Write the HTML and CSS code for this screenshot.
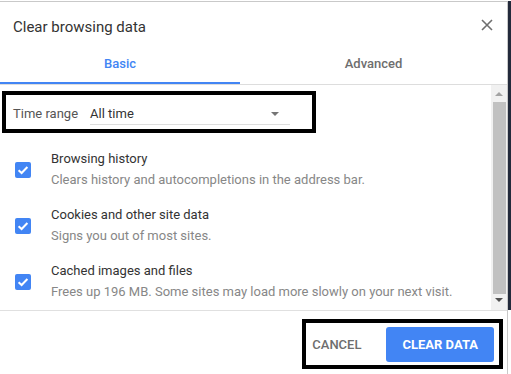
FILE: index.html
```html
<!DOCTYPE html>
<html lang="en">
<head>
  <meta charset="UTF-8">
  <title>Clear browsing data</title>
  <meta name="viewport" content="width=device-width, initial-scale=1.0">
  <link rel="stylesheet" href="styles.css">
</head>
<body>

  <div class="screen">
    <div class="dialog">
      <div class="header">
        <div class="title">Clear browsing data</div>
        <svg class="close" width="12" height="12" viewBox="0 0 12 12">
          <path d="M1 1 L11 11 M11 1 L1 11" stroke="#6f6f6f" stroke-width="1.6" fill="none"/>
        </svg>
      </div>

      <div class="tabs">
        <div class="tab active">Basic</div>
        <div class="tab">Advanced</div>
      </div>

      <div class="main">
        <div class="content">
          <div class="time-range">
            <span class="range-label">Time range</span>
            <div class="select">
              <span>All time</span>
              <span class="arrow"></span>
            </div>
          </div>

          <div class="options">
            <div class="option">
              <span class="checkbox"><svg width="16" height="16" viewBox="0 0 16 16"><path d="M3.6 8.2 L6.6 11 L12.4 5" stroke="#fff" stroke-width="2" fill="none"/></svg></span>
              <div class="option-text">
                <div class="option-title">Browsing history</div>
                <div class="option-sub">Clears history and autocompletions in the address bar.</div>
              </div>
            </div>
            <div class="option">
              <span class="checkbox"><svg width="16" height="16" viewBox="0 0 16 16"><path d="M3.6 8.2 L6.6 11 L12.4 5" stroke="#fff" stroke-width="2" fill="none"/></svg></span>
              <div class="option-text">
                <div class="option-title">Cookies and other site data</div>
                <div class="option-sub">Signs you out of most sites.</div>
              </div>
            </div>
            <div class="option">
              <span class="checkbox"><svg width="16" height="16" viewBox="0 0 16 16"><path d="M3.6 8.2 L6.6 11 L12.4 5" stroke="#fff" stroke-width="2" fill="none"/></svg></span>
              <div class="option-text">
                <div class="option-title">Cached images and files</div>
                <div class="option-sub">Frees up 196 MB. Some sites may load more slowly on your next visit.</div>
              </div>
            </div>
          </div>
        </div>

        <div class="scrollbar">
          <span class="sb-up"></span>
          <div class="sb-thumb"></div>
          <span class="sb-down"></span>
        </div>
      </div>

      <div class="footer">
        <div class="actions">
          <span class="cancel">CANCEL</span>
          <span class="clear">CLEAR DATA</span>
        </div>
      </div>
    </div>
    <div class="edge"></div>
  </div>

</body>
</html>
```

FILE: styles.css
```css
body {
  margin: 0;
  padding-top: 1px;
  font-family: Roboto, 'Noto Sans', sans-serif;
  background: #fff;
}

.screen {
  display: flex;
  height: 373px;
}

.dialog {
  width: 508px;
  box-sizing: border-box;
  border-top: 1px solid #c9c9c9;
  border-right: 1px solid #c9c9c9;
  display: flex;
  flex-direction: column;
}

.edge {
  width: 3px;
  height: 309px;
  background: #232a3b;
}

.header {
  height: 42px;
  display: flex;
  justify-content: space-between;
  align-items: flex-start;
  padding: 0 14px 0 13px;
}

.title {
  font-size: 15px;
  line-height: 20px;
  color: #333;
  padding-top: 15px;
}

.close {
  margin-top: 17px;
}

.tabs {
  display: flex;
  border-bottom: 1px solid #ddd;
}

.tab {
  height: 40px;
  line-height: 40px;
  text-align: center;
  font-size: 13px;
  font-weight: 500;
  color: #6e6e6e;
  flex: 1;
}

.tab.active {
  flex: 0 0 240px;
  color: #4285f4;
  box-shadow: inset 0 -2px #4285f4;
}

.main {
  display: flex;
  height: 225px;
}

.content {
  flex: 1;
  padding: 6px 0 0 2px;
}

.time-range {
  width: 314px;
  height: 42px;
  box-sizing: border-box;
  border: 4px solid #000;
  padding: 4px 22px 0 7px;
  display: flex;
  align-items: center;
  gap: 12px;
}

.range-label {
  font-size: 13px;
  line-height: 20px;
  color: #555;
}

.select {
  flex: 1;
  display: flex;
  justify-content: space-between;
  align-items: center;
  border-bottom: 1px solid #ddd;
  font-size: 13px;
  line-height: 20px;
  color: #333;
}

.arrow {
  width: 0;
  height: 0;
  border-left: 4px solid transparent;
  border-right: 4px solid transparent;
  border-top: 4px solid #757575;
  margin-right: 11px;
}

.options {
  padding: 16px 0 0 13px;
  display: flex;
  flex-direction: column;
  gap: 15px;
}

.option {
  display: flex;
  align-items: center;
  gap: 20px;
}

.checkbox {
  width: 16px;
  height: 16px;
  border-radius: 2px;
  background: #4285f4;
  display: block;
}

.checkbox svg {
  display: block;
}

.option-text {
  font-size: 13px;
  line-height: 20px;
}

.option-title {
  color: #333;
  margin-bottom: 1px;
}

.option-sub {
  color: #878787;
}

.scrollbar {
  width: 16px;
  background: #f1f1f1;
  display: flex;
  flex-direction: column;
  align-items: center;
}

.sb-up,
.sb-down {
  width: 0;
  height: 0;
  border-left: 4px solid transparent;
  border-right: 4px solid transparent;
}

.sb-up {
  border-bottom: 4px solid #a3a3a3;
  margin: 7px 0 6px;
}

.sb-down {
  border-top: 4px solid #505050;
  margin: 4px 0 0;
}

.sb-thumb {
  width: 13px;
  height: 192px;
  margin-left: 1px;
  background: #c1c1c1;
}

.footer {
  flex: 1;
  border-top: 1px solid #e0e0e0;
  display: flex;
  justify-content: flex-end;
  align-items: flex-start;
  padding: 8px 4px 0 0;
}

.actions {
  height: 50px;
  box-sizing: border-box;
  border: 4px solid #000;
  display: flex;
  align-items: center;
  padding: 1px 5px 0 6px;
  gap: 9px;
}

.cancel {
  font-size: 13px;
  font-weight: 500;
  color: #6e6e6e;
  padding: 0 16px 0 0;
}

.clear {
  height: 35px;
  line-height: 35px;
  padding: 0 16px;
  border-radius: 3px;
  background: #4285f4;
  color: #fff;
  font-size: 13px;
  font-weight: 700;
}
```
